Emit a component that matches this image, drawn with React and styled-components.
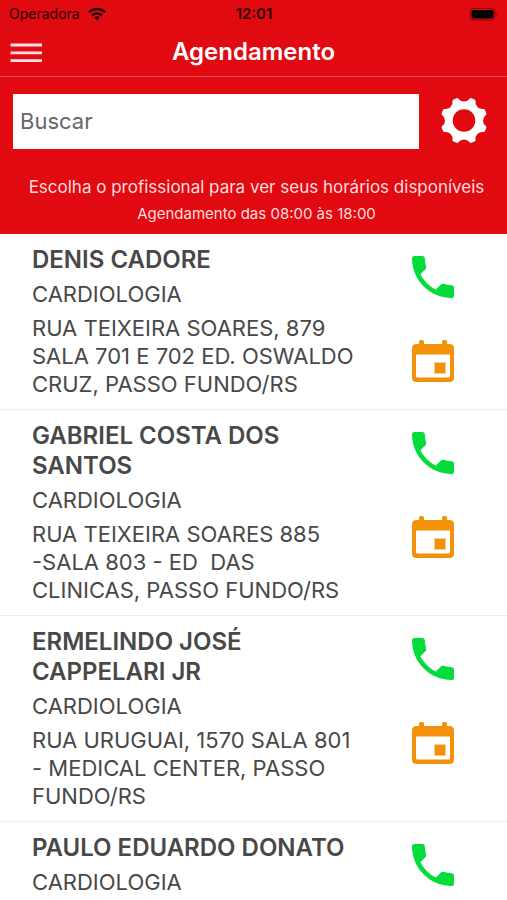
import React from "react";
import styled, { createGlobalStyle } from "styled-components";

const GlobalStyle = createGlobalStyle`
  * { box-sizing: border-box; }
  body { margin: 0; background: #fff; }
  body, button, input { font-family: Inter, "Liberation Sans", sans-serif; }
`;

const Screen = styled.div`
  display: flex;
  flex-direction: column;
  height: 100vh;
  color: #484848;
`;

const Header = styled.header`
  flex: none;
  background: #e10a11;
  color: #fff;
`;

const StatusBar = styled.div`
  display: grid;
  grid-template-columns: 1fr auto 1fr;
  align-items: center;
  height: 27px;
  padding: 0 8px 0 9px;
  font-size: 14px;
  color: #200002;
`;

const Carrier = styled.span`
  display: flex;
  align-items: center;
  gap: 8px;
`;

const Clock = styled.time`
  font-size: 15px;
  font-weight: 600;
`;

const Battery = styled.svg`
  justify-self: end;
`;

const TitleBar = styled.div`
  display: grid;
  grid-template-columns: 52px 1fr 52px;
  align-items: center;
  height: 50px;
  border-bottom: 1px solid #ea4c50;
`;

const Title = styled.h1`
  margin: 0;
  padding-bottom: 3px;
  font-size: 24px;
  line-height: 30px;
  font-weight: 600;
  text-align: center;
`;

const IconButton = styled.button`
  display: flex;
  align-items: center;
  justify-content: center;
  width: ${(p) => p.$size}px;
  height: ${(p) => p.$size}px;
  padding: 0;
  border: 0;
  background: none;
  color: ${(p) => p.$color || "#fff"};
  cursor: pointer;
`;

const SearchRow = styled.form`
  display: flex;
  align-items: center;
  gap: 17px;
  padding: 16px 15px 0 13px;
`;

const SearchInput = styled.input`
  flex: 1;
  min-width: 0;
  height: 55px;
  padding: 0 7px;
  border: 0;
  border-radius: 0;
  background: #fff;
  font-size: 22px;
  color: #484848;
  &::placeholder { color: #666; opacity: 1; }
`;

const Notice = styled.div`
  padding: 26px 0 10px 6px;
  text-align: center;
  color: #ffdcdc;
`;

const Hint = styled.p`
  margin: 0 0 5px;
  font-size: 17px;
  line-height: 24px;
`;

const Hours = styled.p`
  margin: 0;
  font-size: 15px;
  line-height: 20px;
`;

const List = styled.ul`
  flex: 1;
  min-height: 0;
  margin: 0;
  padding: 0;
  list-style: none;
  overflow-y: auto;
  scrollbar-width: none;
`;

const Row = styled.li`
  display: grid;
  grid-template-columns: minmax(0, 1fr) 148px;
  border-bottom: 1px solid #ededed;
`;

const Details = styled.div`
  padding: 11px 0 11px 32px;
`;

const Name = styled.h2`
  margin: 0 0 5px;
  font-size: 24px;
  line-height: 30px;
  font-weight: 600;
`;

const Line = styled.p`
  margin: 0;
  font-size: 22px;
  line-height: 28px;
  white-space: pre-wrap;

  & + & {
    margin-top: 6px;
  }
`;

const Actions = styled.div`
  display: flex;
  flex-direction: column;
  align-items: center;
  gap: 28px;
  padding-top: 15px;
`;

const WifiIcon = () => (
  <svg width="18" height="14" viewBox="0 0 18 14" fill="none" aria-hidden="true">
    <path d="M1 5.2a11.5 11.5 0 0 1 16 0" stroke="currentColor" strokeWidth="2.4" />
    <path d="M4 8.4a7.2 7.2 0 0 1 10 0" stroke="currentColor" strokeWidth="2.3" />
    <path d="M9 13.5 6.1 10.6a4.2 4.2 0 0 1 5.8 0z" fill="currentColor" />
  </svg>
);

const BatteryIcon = () => (
  <Battery width="30" height="14" viewBox="0 0 30 14" aria-label="Bateria">
    <rect x="1" y="1.5" width="25" height="11.5" rx="3" fill="none" stroke="#8e0307" />
    <rect x="2.5" y="3" width="22" height="8.5" rx="1.8" fill="#000" />
    <path d="M27.7 5.5q2 1.7 0 3.4z" fill="#8e0307" />
  </Battery>
);

const MenuIcon = () => (
  <svg width="32" height="20" viewBox="0 0 32 20" aria-hidden="true">
    <path d="M.5 2h31.5M.5 9.8h31.5M.5 17.600h31.500" stroke="#ffdfe0" strokeWidth="2.8" />
  </svg>
);

const point = (radius, degrees) => {
  const t = (degrees * Math.PI) / 180;
  return `${(24 + radius * Math.cos(t)).toFixed(2)} ${(23.5 + radius * Math.sin(t)).toFixed(2)}`;
};

const gearPath =
  Array.from({ length: 8 }, (_, k) => {
    const a = k * 45;
    return `${k ? "L" : "M"}${point(22, a - 18)}A8.5 8.5 0 0 0 ${point(22, a + 18)}`;
  }).join("") + "ZM11.2 23.5a12.8 12.8 0 1 0 25.6 0a12.8 12.8 0 1 0-25.6 0Z";

const GearIcon = () => (
  <svg width="48" height="48" viewBox="0 0 48 48" aria-hidden="true">
    <path d={gearPath} fill="currentColor" fillRule="evenodd" stroke="currentColor" strokeWidth="3" strokeLinejoin="round" />
  </svg>
);

const PhoneIcon = () => (
  <svg width="56" height="56" viewBox="0 0 24 24" fill="currentColor" aria-hidden="true">
    <path d="M6.62 10.79c1.44 2.83 3.76 5.14 6.59 6.59l2.2-2.2c.27-.27.67-.36 1.02-.24 1.12.37 2.33.57 3.57.57.55 0 1 .45 1 1V20c0 .55-.45 1-1 1-9.39 0-17-7.61-17-17 0-.55.45-1 1-1h3.5c.55 0 1 .45 1 1 0 1.25.2 2.45.57 3.57.11.35.03.74-.25 1.02l-2.2 2.2z" />
  </svg>
);

const CalendarIcon = () => (
  <svg width="56" height="56" viewBox="0 0 56 56" fill="currentColor" aria-hidden="true">
    <path d="M14 11V8.5Q14 7 15.5 7h2Q19 7 19 8.5V11h18V8.5Q37 7 38.5 7h2Q42 7 42 8.5V11h2.5Q49 11 49 15.5v29Q49 49 44.5 49h-33Q7 49 7 44.5v-29Q7 11 11.5 11ZM11 21.5V43q0 1.5 1.5 1.5h31Q45 44.5 45 43V21.5Z" fillRule="evenodd" />
    <rect x="29.5" y="29.5" width="11" height="11" rx=".5" />
  </svg>
);

const professionals = [
  {
    name: "DENIS CADORE",
    specialty: "CARDIOLOGIA",
    address: "RUA TEIXEIRA SOARES, 879 SALA 701 E 702 ED. OSWALDO CRUZ, PASSO FUNDO/RS",
  },
  {
    name: "GABRIEL COSTA DOS SANTOS",
    specialty: "CARDIOLOGIA",
    address: "RUA TEIXEIRA SOARES 885\n-SALA 803 - ED  DAS CLINICAS, PASSO FUNDO/RS",
  },
  {
    name: "ERMELINDO JOSÉ CAPPELARI JR",
    specialty: "CARDIOLOGIA",
    address: "RUA URUGUAI, 1570 SALA 801 - MEDICAL CENTER, PASSO FUNDO/RS",
  },
  { name: "PAULO EDUARDO DONATO", specialty: "CARDIOLOGIA" },
];

function Professional({ name, specialty, address }) {
  return (
    <Row>
      <Details>
        <Name>{name}</Name>
        <Line>{specialty}</Line>
        {address && <Line>{address}</Line>}
      </Details>
      <Actions>
        <IconButton type="button" $size={56} $color="#03dc3b" aria-label={`Ligar para ${name}`}>
          <PhoneIcon />
        </IconButton>
        <IconButton type="button" $size={56} $color="#f39208" aria-label={`Agendar com ${name}`}>
          <CalendarIcon />
        </IconButton>
      </Actions>
    </Row>
  );
}

export default function App() {
  return (
    <Screen>
      <GlobalStyle />
      <Header>
        <StatusBar>
          <Carrier>
            Operadora
            <WifiIcon />
          </Carrier>
          <Clock>12:01</Clock>
          <BatteryIcon />
        </StatusBar>
        <TitleBar>
          <IconButton type="button" $size={52} aria-label="Menu">
            <MenuIcon />
          </IconButton>
          <Title>Agendamento</Title>
        </TitleBar>
        <SearchRow role="search">
          <SearchInput type="text" placeholder="Buscar" aria-label="Buscar" />
          <IconButton type="button" $size={56} aria-label="Configurações">
            <GearIcon />
          </IconButton>
        </SearchRow>
        <Notice>
          <Hint>Escolha o profissional para ver seus horários disponíveis</Hint>
          <Hours>Agendamento das 08:00 às 18:00</Hours>
        </Notice>
      </Header>
      <List>
        {professionals.map((p) => (
          <Professional key={p.name} {...p} />
        ))}
      </List>
    </Screen>
  );
}
